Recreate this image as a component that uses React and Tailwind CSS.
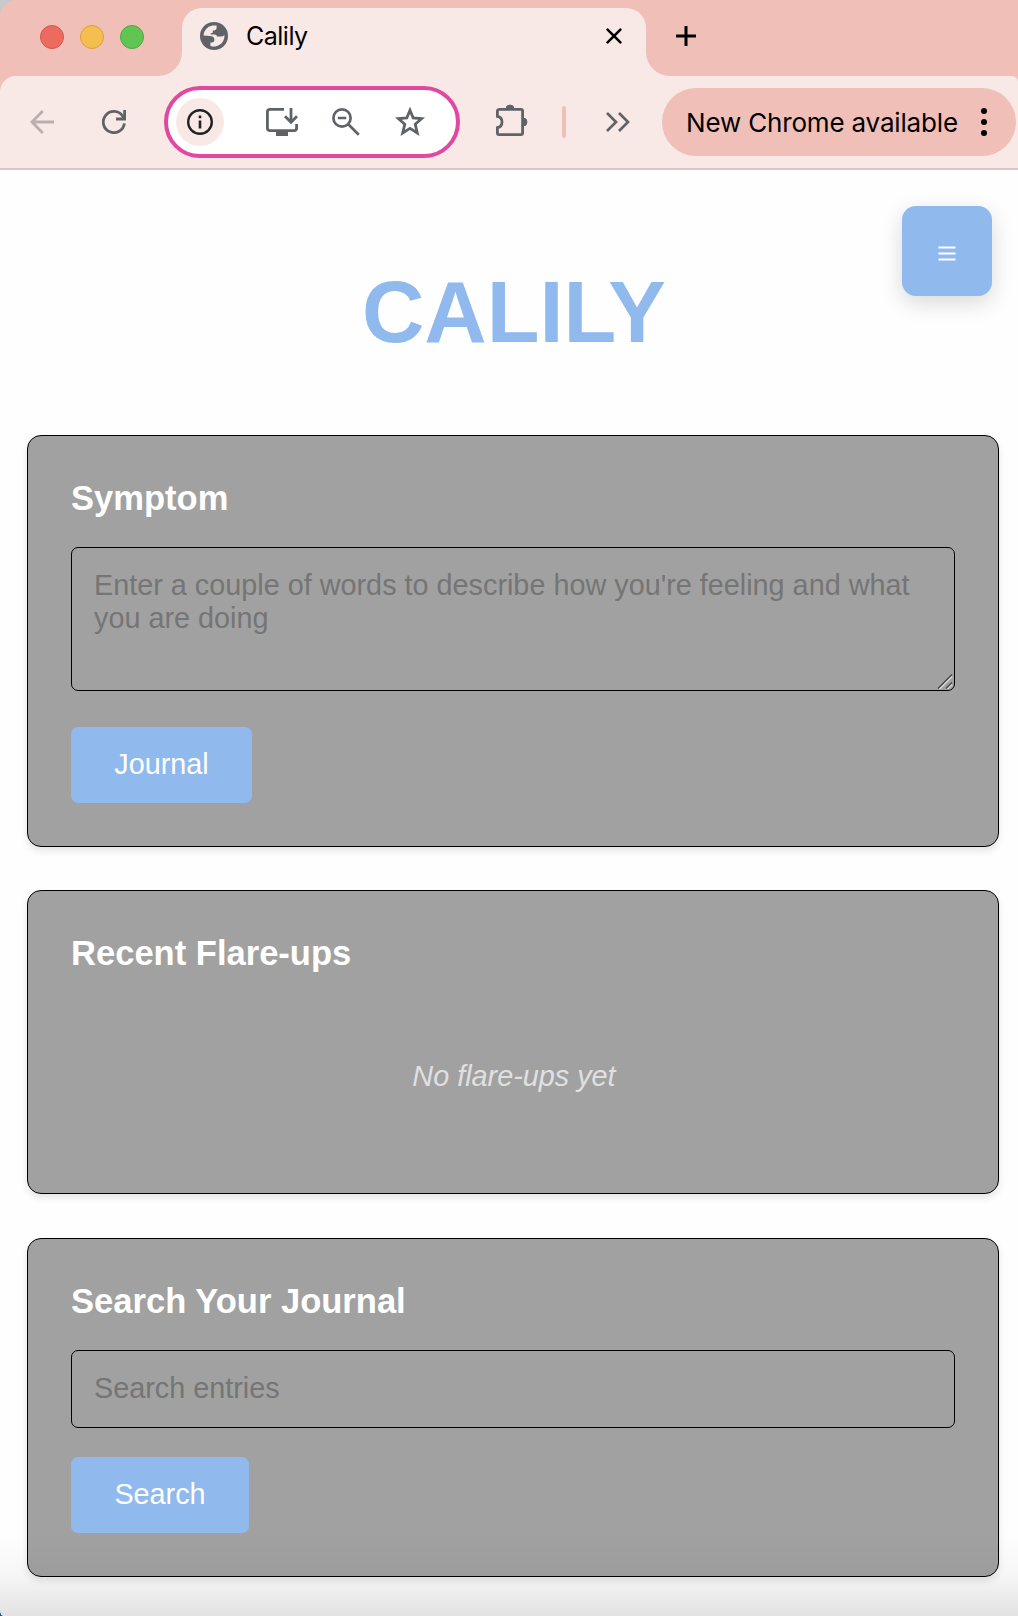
import React from "react";

function Globe() {
  return (
    <svg width="28" height="28" viewBox="0 0 28 28" fill="none">
      <circle cx="14" cy="14" r="14" fill="#5f6368" />
      <path
        d="M3.4 13.6 A10.6 10.6 0 0 1 12.5 3.5 H16.6 V6 Q16.6 8 14.4 8.4 H12.8 V10 Q12.8 11.2 11.4 11.2 H10.6 V12.6 H14.6 Q17 12.6 17 14.6 H21.5 Q23 14.6 24.4 13 A10.6 10.6 0 0 1 10.4 24 V20.4 H12 Q14.4 20.2 14.4 18 Q14.4 14 10 14 Z"
        fill="#f9e9e6"
      />
    </svg>
  );
}

function TabStrip() {
  return (
    <div className="flex h-[76px] rounded-tl-[16px] bg-[#f0bfb8]">
      <div className="flex w-[182px] items-start pl-10 pt-[25px]">
        <div className="flex gap-4">
          <span className="size-6 rounded-full border border-[#d5554a] bg-[#ed6a5e]" />
          <span className="size-6 rounded-full border border-[#d8a140] bg-[#f5bf4f]" />
          <span className="size-6 rounded-full border border-[#4fa73e] bg-[#61c554]" />
        </div>
      </div>
      <div className="relative mt-2 flex w-[464px] items-start rounded-t-[20px] bg-[#f9e9e6] pl-[18px] pt-[14px]">
        <svg className="absolute bottom-0 -left-6" width="24" height="24" viewBox="0 0 24 24">
          <path d="M24 0 V24 H0 A24 24 0 0 0 24 0Z" fill="#f9e9e6" />
        </svg>
        <svg className="absolute bottom-0 -right-6" width="24" height="24" viewBox="0 0 24 24">
          <path d="M0 0 V24 H24 A24 24 0 0 1 0 0Z" fill="#f9e9e6" />
        </svg>
        <Globe />
        <span className="ml-[18px] flex-1 text-[25px] leading-7 tracking-[-0.5px] text-black">Calily</span>
        <svg className="mr-[24px] mt-[6px]" width="16" height="16" viewBox="0 0 16 16" stroke="#000" strokeWidth="2.6" strokeLinecap="round">
          <path d="M1.6 1.6 L14.4 14.4 M14.4 1.6 L1.6 14.4" />
        </svg>
      </div>
      <svg className="ml-[30px] mt-[26px]" width="20" height="20" viewBox="0 0 20 20" stroke="#000" strokeWidth="3">
        <path d="M0 10 H20 M10 0 V20" />
      </svg>
    </div>
  );
}

function Toolbar() {
  return (
    <div className="bg-[#f0bfb8]">
      <div className="flex h-[94px] items-center rounded-tl-[16px] rounded-tr-[6px] border-b-2 border-[#d6c8c9] bg-[#f9e9e6]">
        <svg className="ml-[30px]" width="25" height="24" viewBox="0 0 25 24" fill="none" stroke="#b9afae" strokeWidth="2.8">
          <path d="M24 12 H2 M12.8 1 L2 12 L12.8 23" />
        </svg>
        <svg className="ml-[47px]" width="24" height="24" viewBox="0 0 24 24" fill="none" stroke="#5f6368" strokeWidth="2.8">
          <path d="M22.4 13.3 A10.6 10.6 0 1 1 20.6 6 L22 8.8" />
          <path d="M22.6 0 V9 H14" />
        </svg>
        <div className="ml-[38px] flex h-[72px] w-[296px] items-center rounded-full border-4 border-[#e0499f] bg-white pl-2">
          <div className="flex size-12 items-center justify-center rounded-full bg-[#f9e9e6]">
            <svg width="26" height="26" viewBox="0 0 26 26" fill="none" stroke="#1f2225">
              <circle cx="13" cy="13" r="11.8" strokeWidth="2.4" />
              <path d="M13 11.4 V19.4 M13 6.5 V9.2" strokeWidth="2.6" />
            </svg>
          </div>
          <svg className="ml-[42px]" width="32" height="28" viewBox="0 0 32 28" fill="none" stroke="#5f6368" strokeWidth="2.8">
            <path d="M18 1.4 H4 Q1.4 1.4 1.4 4 V20 Q1.4 22.6 4 22.6 H28 Q30.6 22.6 30.6 20 V16" />
            <path d="M10 25.5 H22" strokeWidth="5" />
            <path d="M25 0 V13.5 M19 8.2 L25 14.2 L31 8.2" />
          </svg>
          <svg className="ml-[34px]" width="28" height="28" viewBox="0 0 28 28" fill="none" stroke="#5f6368" strokeWidth="2.7">
            <circle cx="10" cy="10" r="8.6" />
            <path d="M16 16 L26.8 26.8 M5.8 10 H14.2" />
          </svg>
          <svg className="mb-[2px] ml-[35px]" width="30" height="29" viewBox="0 0 30 29" fill="none" stroke="#5f6368" strokeWidth="2.8">
            <path d="M15 3.2 L18.2 11 L26.6 11.7 L20.2 17.2 L22.3 26 L15 21.3 L7.7 26 L9.8 17.2 L3.4 11.7 L11.8 11 Z" />
          </svg>
        </div>
        <svg className="mb-[5px] ml-9" width="32" height="32" viewBox="0 0 32 32" fill="none" stroke="#5f6368" strokeWidth="2.8">
          <path d="M4 5.4 H25 Q26.6 5.4 26.6 7 V29 Q26.6 30.6 25 30.6 H3 Q1.4 30.6 1.4 29 V23.6 A5.7 5.7 0 0 0 1.4 12.4 V7 Q1.4 5.4 4 5.4Z" />
          <path d="M10 5 A4 4 0 0 1 18 5Z M27 14 A4 4 0 0 1 27 22Z" fill="#5f6368" stroke="#5f6368" strokeWidth="1" />
        </svg>
        <div className="ml-[34px] h-8 w-1 rounded-full bg-[#f0bfb8]" />
        <svg className="ml-10" width="24" height="20" viewBox="0 0 24 20" fill="none" stroke="#5f6368" strokeWidth="2.7">
          <path d="M1 1 L10 10 L1 19 M13 1 L22 10 L13 19" />
        </svg>
        <div className="ml-[32px] flex h-[68px] w-[354px] items-center rounded-full bg-[#f0bfb8] pl-6">
          <span className="w-[295px] whitespace-nowrap text-[26px] tracking-[-0.17px] text-black">New Chrome available</span>
          <span className="flex flex-col gap-[5px]">
            <i className="size-[6px] rounded-full bg-black" />
            <i className="size-[6px] rounded-full bg-black" />
            <i className="size-[6px] rounded-full bg-black" />
          </span>
        </div>
      </div>
    </div>
  );
}

function Card({ title, className, children }) {
  return (
    <section className={"rounded-[14px] border border-black bg-[#a1a1a1] px-[43px] shadow-[0_4px_7px_rgba(0,0,0,0.1)] " + className}>
      <h2 className="pt-[42px] text-[34.56px] leading-10 font-bold text-white">{title}</h2>
      {children}
    </section>
  );
}

function Button({ className, children }) {
  return (
    <button className={"block h-[76px] rounded-[7px] bg-[#90b9ed] text-[28.8px] text-white " + className}>
      {children}
    </button>
  );
}

export default function App() {
  return (
    <div className="relative h-[1616px] w-[1018px] overflow-hidden bg-[#fefefe] font-['Liberation_Sans',Arial,sans-serif]">
      <header className="bg-[#c9c9c9] font-[Inter,sans-serif]">
        <TabStrip />
        <Toolbar />
      </header>

      <button className="absolute top-[206px] left-[902px] flex size-[90px] items-center justify-center rounded-[14px] bg-[#90b9ed] shadow-[0_7px_22px_rgba(0,0,0,0.15)]">
        <svg className="mt-[4px]" width="18" height="15" viewBox="0 0 18 15" stroke="#fff" strokeWidth="2">
          <path d="M0.5 1.5 H17.5 M0.5 7.5 H17.5 M0.5 13.5 H17.5" />
        </svg>
      </button>

      <main className="pr-[19px] pl-[27px]">
        <h1 className="h-[265px] pt-[92px] pl-[2px] text-center text-[86.4px] leading-[100px] font-bold text-[#90b9ed]">CALILY</h1>

        <Card title="Symptom" className="h-[412px]">
          <div className="relative mt-[29px]">
            <textarea
              className="block h-[144px] w-full resize-none rounded-[7px] border border-black bg-transparent px-[22px] py-[21px] text-[28.8px] leading-[33px] placeholder:text-[#757575]"
              placeholder="Enter a couple of words to describe how you're feeling and what you are doing"
            />
            <svg className="absolute right-[2px] bottom-[1px]" width="16" height="17" viewBox="0 0 16 17" fill="none" strokeWidth="1.3">
              <path d="M2.5 16 L15 3.5 M10.5 16 L15 11.5" stroke="#dcdcdc" strokeWidth="1.6" />
              <path d="M1 15.5 L15 1.5 M9 15.5 L15 9.5" stroke="#464646" />
            </svg>
          </div>
          <Button className="mt-9 w-[181px]">Journal</Button>
        </Card>

        <Card title="Recent Flare-ups" className="mt-[43px] h-[304px]">
          <p className="pt-[86px] pl-[2px] text-center text-[28.8px] leading-[34px] text-[#e0e0e0] italic">No flare-ups yet</p>
        </Card>

        <Card title="Search Your Journal" className="mt-[44px] h-[339px]">
          <input
            className="mt-[29px] block h-[78px] w-full rounded-[7px] border border-black bg-transparent px-[22px] pb-[2px] text-[28.8px] placeholder:text-[#757575]"
            placeholder="Search entries"
          />
          <Button className="mt-[29px] w-[178px]">Search</Button>
        </Card>
      </main>

      <div className="pointer-events-none absolute inset-x-0 bottom-0 h-[84px] bg-linear-to-b from-black/0 via-black/3 to-black/11" />
      <svg className="absolute bottom-0 left-0" width="3" height="4" viewBox="0 0 3 4">
        <path d="M0 0 Q0.5 3 3 4 H0Z" fill="#24497c" />
      </svg>
    </div>
  );
}
